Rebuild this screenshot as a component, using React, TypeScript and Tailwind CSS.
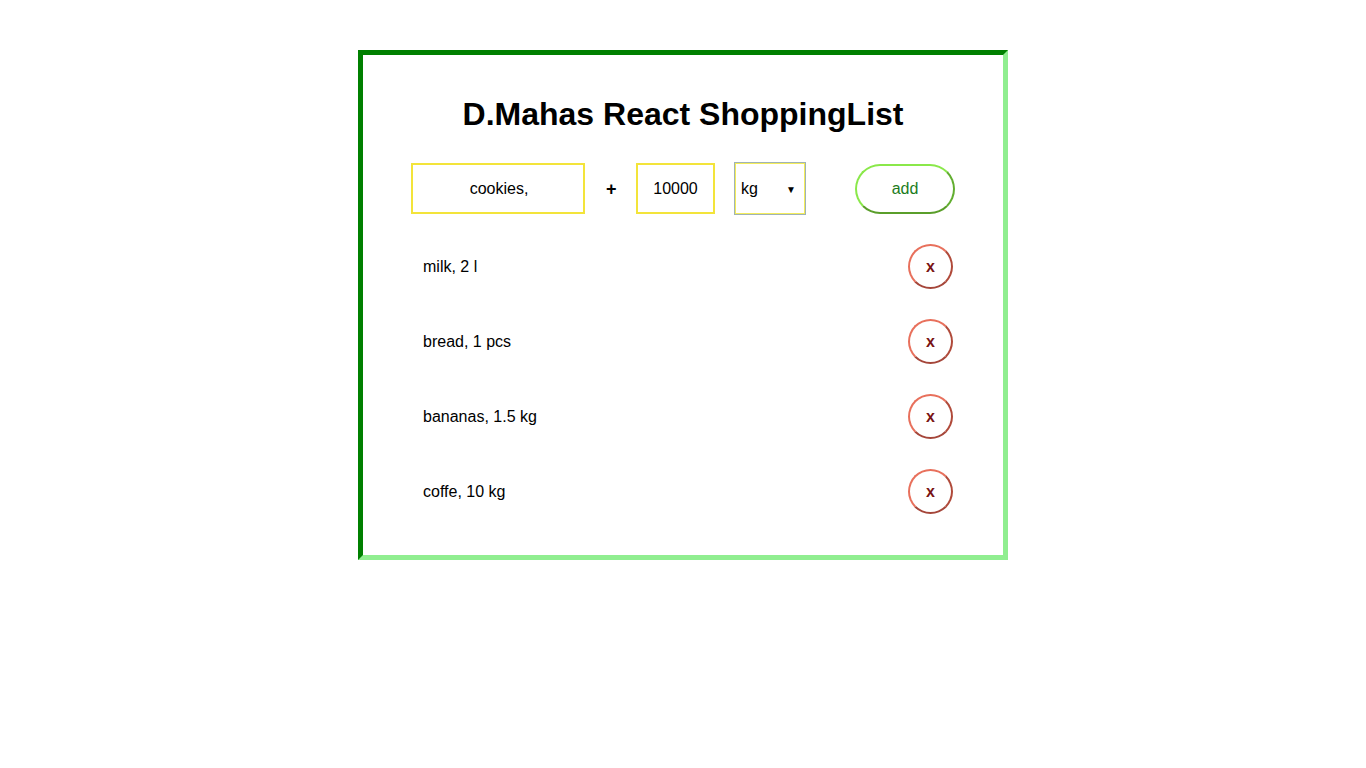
import { useState } from "react";

const items = ["milk, 2 l", "bread, 1 pcs", "bananas, 1.5 kg", "coffe, 10 kg"];

export default function App() {
  const [list, setList] = useState(items);
  return (
    <div className="min-h-screen bg-white pt-[50px] font-['Liberation_Sans',Arial,sans-serif] text-black">
      <div className="mx-auto w-[650px] border-[5px] border-t-[#008000] border-l-[#008000] border-b-[#90ee90] border-r-[#90ee90] pt-[41px] pb-[26px]">
        <h1 className="text-center text-[32px] font-bold leading-[37px]">D.Mahas React ShoppingList</h1>

        <div className="mt-[29px] ml-[48px] flex items-center">
          <input
            defaultValue="cookies,"
            className="h-[51px] w-[174px] border-2 border-[#f3e43a] pl-[2px] text-center text-base outline-none"
          />
          <span className="ml-[21px] w-[9px] text-lg font-bold leading-none">+</span>
          <input
            defaultValue="10000"
            className="ml-[21px] h-[51px] w-[79px] border-2 border-[#f3e43a] text-center text-base outline-none"
          />
          <div className="ml-[19px] h-[53px] w-[72px] border border-[#9fb3b5]">
            <div className="relative h-full w-full border border-[#f3ec5a]">
              <select className="h-full w-full appearance-none bg-white pl-[5px] text-base outline-none">
                <option>kg</option>
                <option>l</option>
                <option>pcs</option>
              </select>
              <span className="pointer-events-none absolute right-[8px] top-1/2 -translate-y-1/2 text-[10px]">▼</span>
            </div>
          </div>
          <button className="ml-[49px] h-[50px] w-[100px] rounded-full border-2 border-t-[#8ae84a] border-l-[#8ae84a] border-r-[#62ae30] border-b-[#5a9e2a] text-base text-[#1c7c1c]">
            add
          </button>
        </div>

        <ul className="mt-[14px] ml-[48px] mr-[47px]">
          {list.map((it) => (
            <li key={it} className="flex h-[75px] items-center justify-between pl-[12px] pr-[3px]">
              <span className="text-base">{it}</span>
              <button
                onClick={() => setList(list.filter((x) => x !== it))}
                className="flex h-[45px] w-[45px] items-center justify-center rounded-full border-2 border-t-[#e8705c] border-l-[#e8705c] border-r-[#b04a3a] border-b-[#a5463a] text-base font-bold text-[#7a1414]"
              >
                x
              </button>
            </li>
          ))}
        </ul>
      </div>
    </div>
  );
}
